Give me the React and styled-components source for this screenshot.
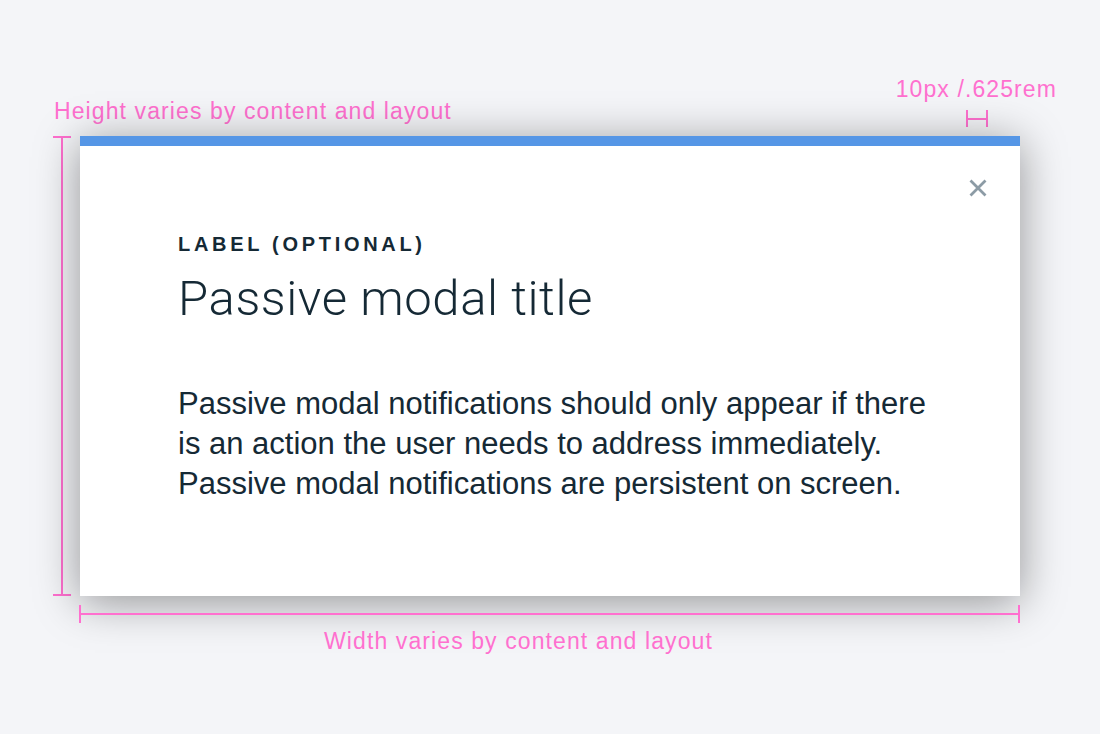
import styled, { createGlobalStyle } from "styled-components";

const GlobalStyle = createGlobalStyle`
  html, body {
    margin: 0;
    padding: 0;
    background: #f4f5f8;
  }
  body {
    font-family: "Liberation Sans", Arial, sans-serif;
  }
`;

export default function App() {
  return (
    <>
      <GlobalStyle />
      <Page>
        <TopRow>
          <HeightNote>Height varies by content and layout</HeightNote>
          <SizeNote>
            <Note>10px /.625rem</Note>
            <Span10>
              <Tick />
              <HLine />
              <Tick />
            </Span10>
          </SizeNote>
        </TopRow>

        <MiddleRow>
          <VRule>
            <Cap />
            <VLine />
            <Cap />
          </VRule>
          <Modal>
            <Bar />
            <CloseRow>
              <CloseButton aria-label="Close">
                <svg width="20" height="20" viewBox="0 0 20 20">
                  <path
                    d="M2.5 2.5 L17.5 17.5 M17.5 2.5 L2.5 17.5"
                    stroke="#8c9ba5"
                    strokeWidth="2.8"
                    fill="none"
                  />
                </svg>
              </CloseButton>
            </CloseRow>
            <Content>
              <Label>LABEL (OPTIONAL)</Label>
              <Title>Passive modal title</Title>
              <Body>
                Passive modal notifications should only appear if there
                <br />
                is an action the user needs to address immediately.
                <br />
                Passive modal notifications are persistent on screen.
              </Body>
            </Content>
          </Modal>
        </MiddleRow>

        <HRule>
          <VTick />
          <HRuleLine />
          <VTick />
        </HRule>
        <WidthNote>Width varies by content and layout</WidthNote>
      </Page>
    </>
  );
}

const pink = "#ff70cf";

const Page = styled.div`
  width: 1100px;
  height: 734px;
  padding-top: 78px;
  box-sizing: border-box;
  background: #f4f5f8;
  overflow: hidden;
`;

const Note = styled.div`
  font-size: 23px;
  line-height: 23px;
  letter-spacing: 1.1px;
  color: ${pink};
  white-space: nowrap;
`;

const TopRow = styled.div`
  display: flex;
  align-items: flex-start;
  height: 58px;
`;

const HeightNote = styled(Note)`
  margin-top: 22px;
  margin-left: 54px;
`;

const SizeNote = styled.div`
  display: flex;
  flex-direction: column;
  align-items: center;
  margin-left: auto;
  margin-right: 43px;
`;

const Span10 = styled.div`
  display: flex;
  align-items: center;
  margin-top: 9px;
  height: 17px;
  width: 22px;
  margin-left: 2px;
`;

const Tick = styled.div`
  width: 2px;
  height: 17px;
  background: ${pink};
`;

const HLine = styled.div`
  flex: 1;
  height: 2px;
  background: ${pink};
`;

const MiddleRow = styled.div`
  display: flex;
  align-items: stretch;
  padding-left: 53px;
  gap: 9px;
`;

const VRule = styled.div`
  display: flex;
  flex-direction: column;
  align-items: center;
  width: 18px;
`;

const Cap = styled.div`
  width: 18px;
  height: 2px;
  background: ${pink};
`;

const VLine = styled.div`
  flex: 1;
  width: 2px;
  background: ${pink};
`;

const Modal = styled.div`
  width: 940px;
  background: #ffffff;
  box-shadow: 0 6px 42px rgba(0, 0, 0, 0.4);
  display: flex;
  flex-direction: column;
  padding-bottom: 92px;
`;

const Bar = styled.div`
  height: 10px;
  background: #5596e6;
`;

const CloseRow = styled.div`
  display: flex;
  justify-content: flex-end;
  padding: 32px 32px 0 0;
`;

const CloseButton = styled.button`
  border: 0;
  padding: 0;
  background: none;
  width: 20px;
  height: 20px;
  display: block;
  cursor: pointer;
  svg {
    display: block;
  }
`;

const Content = styled.div`
  padding-left: 98px;
  margin-top: 36px;
  color: #152935;
`;

const Label = styled.div`
  font-size: 20px;
  line-height: 20px;
  font-weight: 700;
  letter-spacing: 3.7px;
`;

const Title = styled.h1`
  margin: 21px 0 0;
  font-family: Roboto, "Liberation Sans", sans-serif;
  font-weight: 300;
  font-size: 49px;
  line-height: 48px;
  letter-spacing: 0.6px;
`;

const Body = styled.p`
  margin: 61px 0 0;
  font-size: 31px;
  line-height: 40px;
`;

const HRule = styled.div`
  display: flex;
  align-items: center;
  width: 941px;
  height: 18px;
  margin: 9px 0 0 79px;
`;

const VTick = styled.div`
  width: 2px;
  height: 18px;
  background: ${pink};
`;

const HRuleLine = styled.div`
  flex: 1;
  height: 2px;
  background: ${pink};
`;

const WidthNote = styled(Note)`
  margin: 7px 0 0 324px;
`;
